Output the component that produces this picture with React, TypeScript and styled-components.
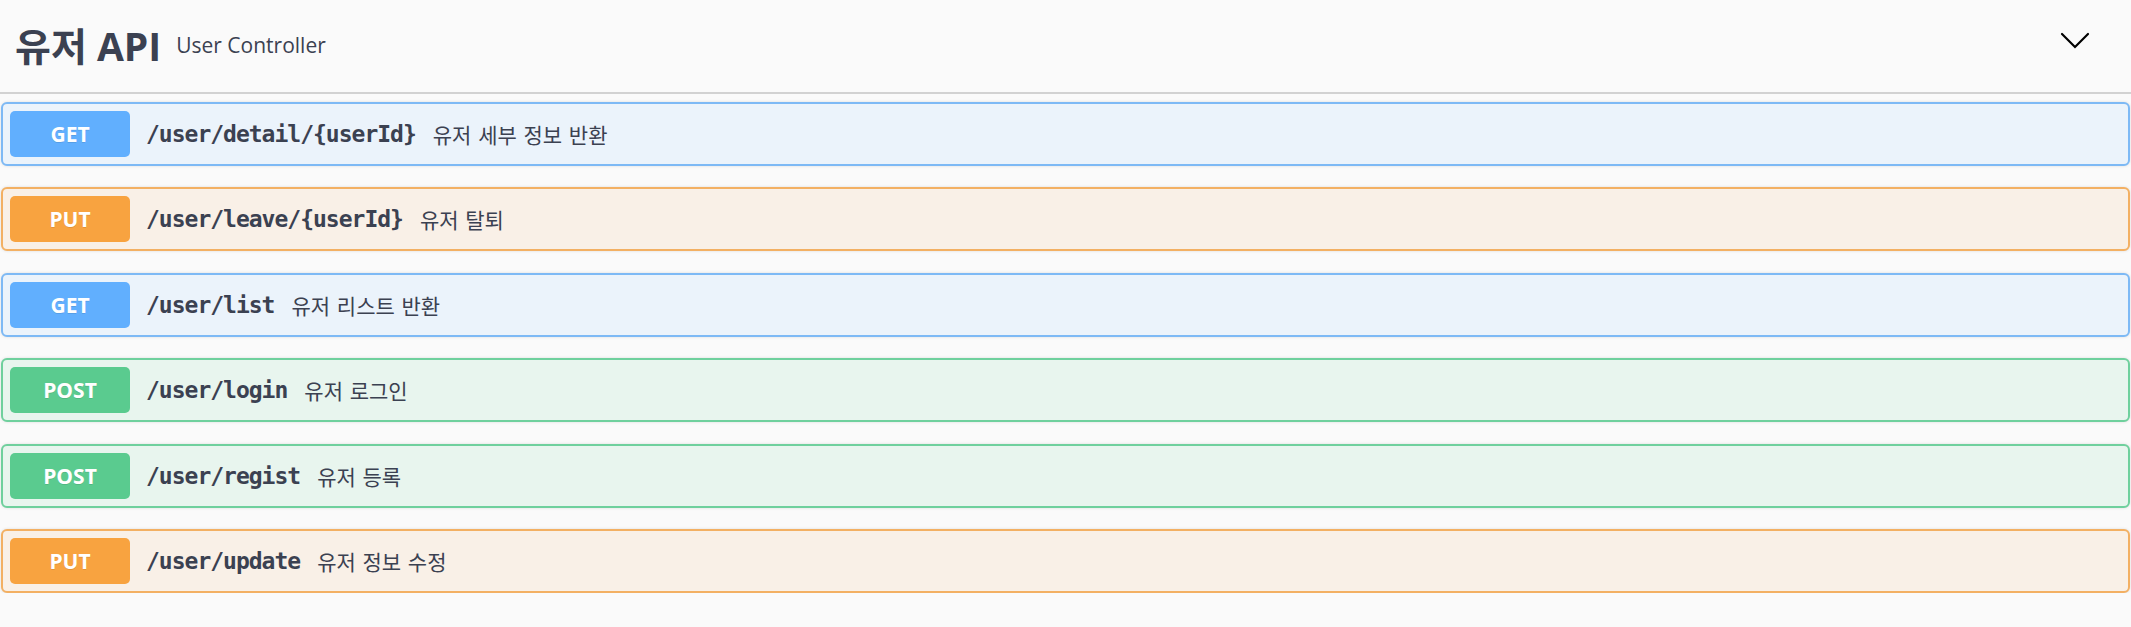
import React from "react";
import styled, { createGlobalStyle } from "styled-components";

const GlobalStyle = createGlobalStyle`
  html, body {
    margin: 0;
    padding: 0;
    background: #fafafa;
  }
  * { box-sizing: border-box; }
`;

type Method = "GET" | "PUT" | "POST";

const COLORS: Record<Method, { main: string; border: string; bg: string }> = {
  GET: { main: "#61affe", border: "#7db9f5", bg: "#ebf3fb" },
  PUT: { main: "#f8a340", border: "#f3b063", bg: "#f9f0e7" },
  POST: { main: "#5acb8f", border: "#6fd09d", bg: "#e8f5ee" },
};

const Page = styled.div`
  width: 100%;
  background: #fafafa;
  font-family: "Open Sans", "Noto Sans CJK KR", sans-serif;
  color: #3b4151;
`;

const TagHeader = styled.div`
  display: flex;
  align-items: center;
  height: 94px;
  padding: 0 40px 2px 15px;
  border-bottom: 2px solid #d2d2d2;
`;

const TagTitle = styled.h3`
  margin: 0;
  font-family: "Open Sans", "Noto Sans CJK KR", sans-serif;
  font-size: 39px;
  font-weight: 700;
  color: #3b4151;
  line-height: 1;
`;

const TagSmall = styled.span`
  margin-left: 15px;
  font-family: "Open Sans", "Noto Sans CJK KR", sans-serif;
  font-size: 21px;
  font-weight: 400;
  color: #3b4151;
`;

const Spacer = styled.div`
  flex: 1;
`;

const ExpandButton = styled.button`
  display: flex;
  align-items: center;
  justify-content: center;
  width: 32px;
  height: 32px;
  padding: 0;
  margin-top: -8px;
  border: none;
  background: transparent;
  cursor: pointer;
`;

const OpList = styled.div`
  display: flex;
  flex-direction: column;
  gap: 21.4px;
  padding: 8px 1px 0;
`;

const OpBlock = styled.div<{ $method: Method }>`
  display: flex;
  align-items: center;
  height: 64px;
  padding: 0 7px;
  border: 2px solid ${(p) => COLORS[p.$method].border};
  border-radius: 6px;
  background: ${(p) => COLORS[p.$method].bg};
  box-shadow: 0 0 3px rgba(0, 0, 0, 0.12);
`;

const MethodBadge = styled.span<{ $method: Method }>`
  display: flex;
  align-items: center;
  justify-content: center;
  width: 120px;
  height: 46px;
  border-radius: 5px;
  background: ${(p) => COLORS[p.$method].main};
  color: #fff;
  font-family: "Open Sans", sans-serif;
  font-size: 21px;
  font-weight: 700;
  text-shadow: 0 1px 0 rgba(0, 0, 0, 0.1);
`;

const Path = styled.span`
  margin-left: 16px;
  font-family: "DejaVu Sans Mono", "Liberation Mono", monospace;
  font-size: 23px;
  font-weight: 700;
  letter-spacing: -1px;
  color: #3b4151;
`;

const Description = styled.span`
  margin-left: 17px;
  font-family: "Noto Sans CJK KR", sans-serif;
  font-size: 21px;
  word-spacing: 2px;
  color: #3b4151;
`;

const ops: { method: Method; path: string; desc: string }[] = [
  { method: "GET", path: "/user/detail/{userId}", desc: "유저 세부 정보 반환" },
  { method: "PUT", path: "/user/leave/{userId}", desc: "유저 탈퇴" },
  { method: "GET", path: "/user/list", desc: "유저 리스트 반환" },
  { method: "POST", path: "/user/login", desc: "유저 로그인" },
  { method: "POST", path: "/user/regist", desc: "유저 등록" },
  { method: "PUT", path: "/user/update", desc: "유저 정보 수정" },
];

const Chevron = () => (
  <svg width="30" height="30" viewBox="0 0 30 30">
    <polyline
      points="2,8 15,21 28,8"
      fill="none"
      stroke="#000"
      strokeWidth="2.2"
      strokeLinecap="round"
      strokeLinejoin="miter"
    />
  </svg>
);

export default function App() {
  return (
    <Page>
      <GlobalStyle />
      <TagHeader>
        <TagTitle>유저 API</TagTitle>
        <TagSmall>User Controller</TagSmall>
        <Spacer />
        <ExpandButton aria-label="collapse">
          <Chevron />
        </ExpandButton>
      </TagHeader>
      <OpList>
        {ops.map((op) => (
          <OpBlock key={op.method + op.path} $method={op.method}>
            <MethodBadge $method={op.method}>{op.method}</MethodBadge>
            <Path>{op.path}</Path>
            <Description>{op.desc}</Description>
          </OpBlock>
        ))}
      </OpList>
    </Page>
  );
}
